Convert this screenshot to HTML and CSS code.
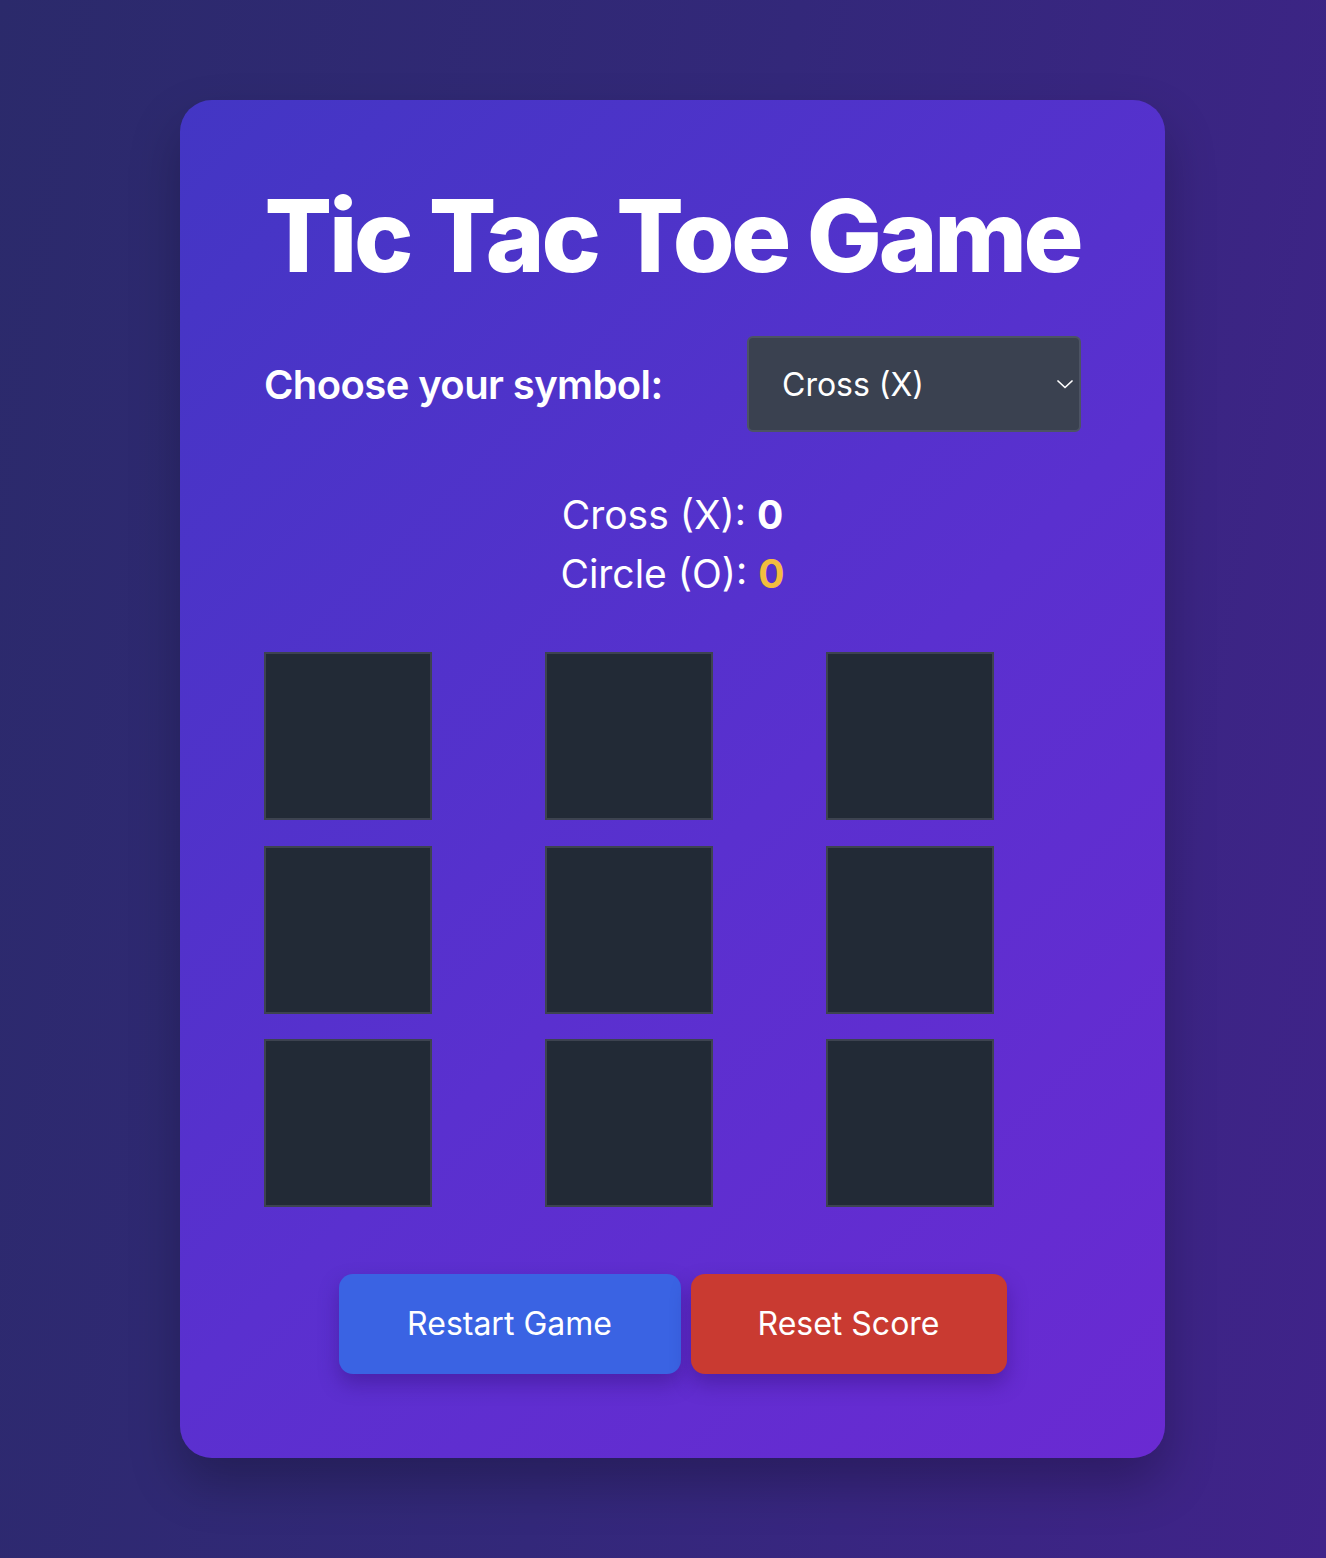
FILE: index.html
```html
<!DOCTYPE html>
<html lang="en">
<head>
<meta charset="utf-8">
<title>Tic Tac Toe Game</title>
<link rel="stylesheet" href="styles.css">
</head>
<body>
<main class="page">
  <section class="card">
    <h1 class="title">Tic Tac Toe Game</h1>
    <div class="chooser">
      <label class="chooser-label" for="symbol">Choose your symbol:</label>
      <div class="select-wrap">
        <select id="symbol" class="select">
          <option>Cross (X)</option>
          <option>Circle (O)</option>
        </select>
        <svg class="chevron" width="22" height="22" viewBox="0 0 22 22" aria-hidden="true"><path d="M4 8 L11 14.5 L18 8" fill="none" stroke="#ffffff" stroke-width="1.7" stroke-linecap="round" stroke-linejoin="round"/></svg>
      </div>
    </div>
    <div class="scores">
      <p class="score">Cross (X): <strong class="score-x">0</strong></p>
      <p class="score">Circle (O): <strong class="score-o">0</strong></p>
    </div>
    <div class="board">
      <button class="cell"></button>
      <button class="cell"></button>
      <button class="cell"></button>
      <button class="cell"></button>
      <button class="cell"></button>
      <button class="cell"></button>
      <button class="cell"></button>
      <button class="cell"></button>
      <button class="cell"></button>
    </div>
    <div class="actions">
      <button class="btn btn-restart">Restart Game</button>
      <button class="btn btn-reset">Reset Score</button>
    </div>
  </section>
</main>
</body>
</html>
```
FILE: styles.css
```css
* { box-sizing: border-box; }
html, body { margin: 0; padding: 0; }
body {
  font-family: Inter, "Noto Sans", "Liberation Sans", sans-serif;
  color: #ffffff;
  background: linear-gradient(100deg, #2b2a6b 0%, #33287a 50%, #40238a 100%);
  min-height: 1558px;
}
.page {
  padding: 100px 161px 100px 180px;
  display: flex;
}
.card {
  width: 985px;
  height: 1358px;
  border-radius: 32px;
  padding: 86px 84px 84px;
  background: linear-gradient(135deg, #4336c4 0%, #5a30cf 55%, #6a2ad2 100%);
  box-shadow: 0 25px 50px rgba(0, 0, 0, 0.25);
  display: flex;
  flex-direction: column;
}
.title {
  margin: 0;
  font-size: 100px;
  line-height: 100px;
  font-weight: 800;
  letter-spacing: -3.3px;
  text-align: center;
  white-space: nowrap;
}
.chooser {
  margin-top: 50px;
  display: flex;
  justify-content: space-between;
  align-items: center;
}
.chooser-label {
  font-size: 40px;
  font-weight: 600;
  line-height: 48px;
  letter-spacing: -0.6px;
  padding-top: 2px;
}
.select-wrap {
  position: relative;
  width: 334px;
  height: 96px;
}
.select {
  appearance: none;
  -webkit-appearance: none;
  width: 100%;
  height: 100%;
  background: #3a4150;
  border: 2px solid #4c5363;
  border-radius: 6px;
  color: #ffffff;
  font-family: inherit;
  font-size: 32px;
  padding: 0 40px 0 33px;
  outline: none;
}
.chevron {
  position: absolute;
  right: 5px;
  top: 37px;
  pointer-events: none;
}
.scores {
  margin-top: 53px;
  text-align: center;
}
.score {
  margin: 0;
  font-size: 39px;
  line-height: 59px;
  font-weight: 400;
}
.score strong { font-weight: 700; }
.score-x { color: #ffffff; }
.score-o { color: #f2bd3f; }
.board {
  margin-top: 49px;
  display: grid;
  grid-template-columns: repeat(3, 1fr);
  column-gap: 26px;
  row-gap: 25.5px;
}
.cell {
  width: 168px;
  height: 168px;
  background: #222a36;
  border: 2px solid #3d4350;
  padding: 0;
  display: block;
}
.actions {
  margin-top: 67px;
  display: flex;
  justify-content: center;
  gap: 10px;
}
.btn {
  font-family: inherit;
  font-size: 32px;
  line-height: 48px;
  font-weight: 400;
  color: #ffffff;
  border: none;
  border-radius: 14px;
  height: 100px;
  padding: 0 66px;
  box-shadow: 0 10px 20px rgba(40, 10, 100, 0.35);
}
.btn-restart { background: #3a63e3; width: 342px; }
.btn-reset { background: #c93a31; width: 316px; }
```
